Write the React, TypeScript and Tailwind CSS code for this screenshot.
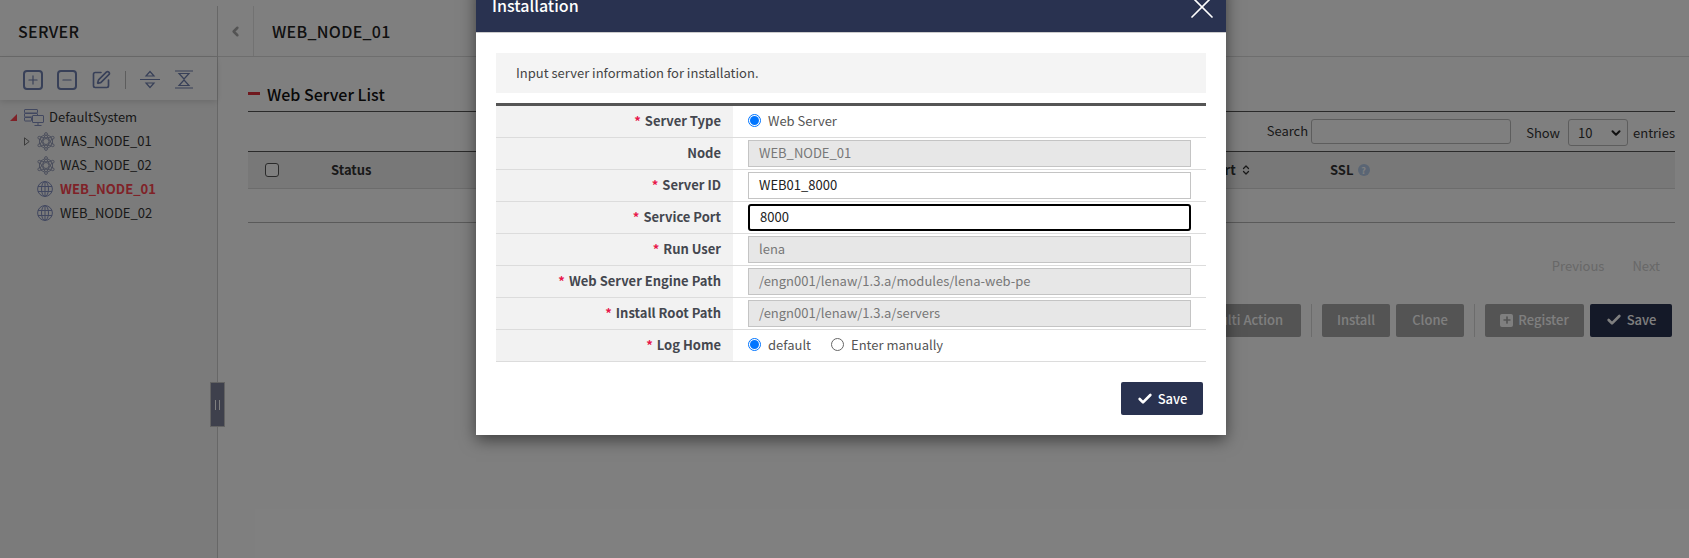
import React from "react";
import { Check, ChevronDown, ChevronLeft, ChevronsUpDown, SquarePen, Plus, Minus, X } from "lucide-react";

const font = "font-['Noto_Sans_CJK_KR','Noto_Sans',sans-serif]";

function ServerIcon() {
  return (
    <svg width="20" height="17" viewBox="0 0 20 17" fill="none" stroke="#8490c0" strokeWidth="1">
      <rect x="0.5" y="0.5" width="13" height="3.5" rx="0.5" />
      <rect x="0.5" y="4.5" width="13" height="3.5" rx="0.5" />
      <rect x="0.5" y="8.5" width="7" height="3.5" rx="0.5" />
      <rect x="8.5" y="6.5" width="11" height="7" rx="0.5" fill="#f6f6f6" />
      <path d="M14 13.5v2.5M10.5 16.5h7" />
    </svg>
  );
}

function AtomIcon() {
  return (
    <svg width="18" height="19" viewBox="0 0 18 19" fill="none" stroke="#8f96b4" strokeWidth="0.9">
      <path d="M9 2 15.5 5.7v7.6L9 17 2.5 13.3V5.7Z" />
      <path d="M9 2 2.5 13.3h13ZM9 17 2.5 5.7h13Z" />
      <circle cx="9" cy="9.5" r="3" />
      <circle cx="9" cy="2" r="1.4" fill="#f6f6f6" />
      <circle cx="9" cy="17" r="1.4" fill="#f6f6f6" />
      <circle cx="2.3" cy="5.7" r="1.4" fill="#f6f6f6" />
      <circle cx="15.7" cy="5.7" r="1.4" fill="#f6f6f6" />
      <circle cx="2.3" cy="13.3" r="1.4" fill="#f6f6f6" />
      <circle cx="15.7" cy="13.3" r="1.4" fill="#f6f6f6" />
    </svg>
  );
}

function GlobeIcon() {
  return (
    <svg width="16" height="16" viewBox="0 0 16 16" fill="none" stroke="#8490c0" strokeWidth="1">
      <circle cx="8" cy="8" r="7.4" />
      <ellipse cx="8" cy="8" rx="3.5" ry="7.4" />
      <path d="M8 .6v14.8M1 5.5h14M1 10.5h14" />
    </svg>
  );
}

function ExpandIcon() {
  return (
    <svg width="20" height="19" viewBox="0 0 20 19" fill="none" stroke="#7080b0" strokeWidth="1.2">
      <path d="M0 9.5h20M10 1.5 14 6H6ZM10 17.5 14 13H6Z" />
    </svg>
  );
}

function CollapseIcon() {
  return (
    <svg width="20" height="19" viewBox="0 0 20 19" fill="none" stroke="#7080b0" strokeWidth="1.2">
      <path d="M1 1h18M1 18h18M5 3.5h10L10 9ZM5 15.5h10L10 10Z" />
    </svg>
  );
}

function IconBox({ children }: { children: React.ReactNode }) {
  return (
    <span className="flex h-[20px] w-[20px] items-center justify-center rounded-[4px] border-2 border-[#7080b0]">
      {children}
    </span>
  );
}

function TreeItem({ icon, label, active, arrow }: { icon: React.ReactNode; label: string; active?: boolean; arrow?: boolean }) {
  return (
    <div className="flex h-6 items-center pl-[24px]">
      <span className="flex w-[13px] items-center">
        {arrow && (
          <svg width="6" height="9" viewBox="0 0 6 9" fill="none" stroke="#777" strokeWidth="1">
            <path d="M.5.8 5.2 4.5.5 8.2Z" />
          </svg>
        )}
      </span>
      <span className="flex w-[23px] items-center">{icon}</span>
      <span className={active ? "text-[13px] font-bold text-[#ff4450]" : "text-[13px] text-[#333]"}>{label}</span>
    </div>
  );
}

function Sidebar() {
  return (
    <aside className="relative flex w-[218px] shrink-0 flex-col border-r border-[#cfcfcf] bg-[#f6f6f6]">
      <div className="flex h-[51px] items-center border-b border-[#d4d4d4] bg-white pl-[18px] text-[16px] font-medium tracking-[0.3px] text-[#222]">SERVER</div>
      <div className="flex h-[43px] items-center gap-[14px] bg-white pl-[23px] pt-[2px] shadow-[0_2px_6px_rgba(0,0,0,0.12)]">
        <IconBox><Plus size={14} strokeWidth={2} color="#7080b0" /></IconBox>
        <IconBox><Minus size={14} strokeWidth={2} color="#7080b0" /></IconBox>
        <SquarePen size={20} strokeWidth={2} color="#7080b0" />
        <span className="h-[18px] w-px bg-[#bbb]" />
        <ExpandIcon />
        <CollapseIcon />
      </div>
      <div className="pt-[5px]">
        <div className="flex h-6 items-center pl-[10px]">
          <span className="mr-[7px] h-0 w-0 border-b-[7px] border-l-[7px] border-b-[#ff4450] border-l-transparent" />
          <span className="mr-[5px] flex"><ServerIcon /></span>
          <span className="text-[13px] text-[#333]">DefaultSystem</span>
        </div>
        <TreeItem arrow icon={<AtomIcon />} label="WAS_NODE_01" />
        <TreeItem icon={<AtomIcon />} label="WAS_NODE_02" />
        <TreeItem active icon={<GlobeIcon />} label="WEB_NODE_01" />
        <TreeItem icon={<GlobeIcon />} label="WEB_NODE_02" />
      </div>
      <div className="absolute right-[-8px] top-[376px] flex h-[45px] w-[15px] items-center justify-center border border-[#c4c4c4] bg-[#7c8199]">
        <span className="h-[10px] w-[5px] border-x border-white" />
      </div>
    </aside>
  );
}

function Btn({ children, dark, className }: { children: React.ReactNode; dark?: boolean; className: string }) {
  return (
    <span className={`flex h-[33px] items-center justify-center rounded-[2px] text-[13px] font-medium text-white ${dark ? "bg-[#293250]" : "bg-[#a8a8a8]"} ${className}`}>
      {children}
    </span>
  );
}

function Main() {
  return (
    <main className="min-w-0 flex-1 bg-white">
      <div className="flex h-[51px] items-center border-b border-[#dcdcdc]">
        <span className="flex h-full w-[36px] items-center justify-center border-r border-[#e4e4e4]">
          <ChevronLeft size={15} strokeWidth={4} color="#a8a8a8" />
        </span>
        <span className="pl-[18px] text-[16px] font-medium tracking-[0.3px] text-[#222]">WEB_NODE_01</span>
      </div>
      <div className="pl-[30px] pr-[14px]">
        <div className="flex h-[55px] items-end gap-[7px] border-b border-[#555] pb-[5px]">
          <span className="mb-[11px] h-[3px] w-[12px] bg-[#e0313c]" />
          <span className="text-[16px] font-medium text-[#111]">Web Server List</span>
        </div>
        <div className="flex h-[39px] items-start justify-end pt-[7px] text-[13px] text-[#333]">
          <span className="mr-[3px] leading-[24px]">Search</span>
          <span className="h-[25px] w-[200px] rounded-[3px] border border-[#bbb] bg-white" />
          <span className="ml-[15px] mr-[8px] pt-[2px] leading-[24px]">Show</span>
          <span className="flex h-[27px] w-[60px] items-center justify-between rounded-[3px] border border-[#bbb] pl-[9px] pr-[4px]">
            10 <ChevronDown size={14} strokeWidth={3.5} color="#222" />
          </span>
          <span className="ml-[5px] pt-[2px] leading-[24px]">entries</span>
        </div>
        <div className="flex h-[38px] items-center border-y border-[#555] border-b-[#d8d8d8] bg-[#f1f1f1] text-[13px] font-bold text-[#333]">
          <span className="ml-[17px] h-[14px] w-[14px] rounded-[3px] border border-[#555] bg-white" />
          <span className="ml-[52px] w-[40px]">Status</span>
          <span className="ml-[837px] flex w-[122px] items-center">Port <ChevronsUpDown size={12} strokeWidth={2.5} className="ml-[4px]" /></span>
          <span className="flex items-center gap-[4px]">
            SSL
            <span className="flex h-[12px] w-[12px] items-center justify-center rounded-full bg-[#b4cbe8] text-[9px] leading-none text-white">?</span>
          </span>
        </div>
        <div className="h-[34px] border-b border-[#b5b5b5]" />
        <div className="mt-[33px] flex justify-end pr-[15px] text-[13px] text-[#d0d0d0]">
          <span className="mr-[28px]">Previous</span>
          <span>Next</span>
        </div>
        <div className="mt-[28px] flex items-center justify-end gap-[6px] pr-[3px]">
          <Btn className="w-[110px]">Multi Action</Btn>
          <span className="mx-[4px] h-[33px] w-px bg-[#d8d8d8]" />
          <Btn className="w-[68px]">Install</Btn>
          <Btn className="w-[68px]">Clone</Btn>
          <span className="mx-[4px] h-[33px] w-px bg-[#d8d8d8]" />
          <Btn className="w-[99px] gap-[5px]"><span className="flex h-[13px] w-[13px] items-center justify-center rounded-[2px] bg-white"><Plus size={10} strokeWidth={4} color="#a8a8a8" /></span>Register</Btn>
          <Btn dark className="w-[82px] gap-[5px]"><Check size={16} strokeWidth={4} />Save</Btn>
        </div>
      </div>
    </main>
  );
}

function Field({ label, required, children }: { label: string; required?: boolean; children: React.ReactNode }) {
  return (
    <div className="flex h-[32px] border-b border-[#dcdcdc]">
      <div className="flex w-[237px] shrink-0 items-center justify-end bg-[#f2f2f2] pb-[2px] pr-[12px] text-[13px] font-bold text-[#44474f]">
        {required && <span className="mr-[4px] text-[#e8174b]">*</span>}
        {label}
      </div>
      <div className="flex flex-1 items-center pl-[15px] pr-[15px] text-[13px] text-[#555]">{children}</div>
    </div>
  );
}

function TextBox({ value, disabled, focused }: { value: string; disabled?: boolean; focused?: boolean }) {
  let tone = "border border-[#c4c4c4] bg-white text-[#222]";
  if (disabled) tone = "border border-[#c4c4c4] bg-[#e7e7e7] text-[#777]";
  if (focused) tone = "border-2 border-black rounded-[3px] bg-white text-[#222] pl-[9px]";
  return <div className={`flex h-[27px] w-full items-center pb-[1px] pl-[10px] text-[13px] ${tone}`}>{value}</div>;
}

function Radio({ checked, label }: { checked?: boolean; label: string }) {
  return (
    <span className="mb-[2px] mr-[20px] flex items-center gap-[7px]">
      {checked ? (
        <span className="flex h-[13px] w-[13px] items-center justify-center rounded-full border border-[#0075ff]">
          <span className="h-[9px] w-[9px] rounded-full bg-[#0075ff]" />
        </span>
      ) : (
        <span className="h-[13px] w-[13px] rounded-full border border-[#666]" />
      )}
      {label}
    </span>
  );
}

function Modal() {
  return (
    <div className="absolute left-[476px] top-[-18px] w-[750px] bg-white shadow-[0_5px_15px_rgba(0,0,0,0.5)]">
      <div className="flex h-[51px] items-center justify-between border-b border-[#ccc] bg-[#293250] pl-[16px] pr-[4px] text-white">
        <span className="mb-[5px] text-[16px] font-medium">Installation</span>
        <X size={40} strokeWidth={1} />
      </div>
      <div className="px-[20px] pt-[20px] pb-[20px]">
        <div className="flex h-[40px] items-center bg-[#f4f4f4] pl-[20px] text-[13px] text-[#444]">Input server information for installation.</div>
        <div className="mt-[10px] border-t-[3px] border-[#555]">
          <Field required label="Server Type"><Radio checked label="Web Server" /></Field>
          <Field label="Node"><TextBox disabled value="WEB_NODE_01" /></Field>
          <Field required label="Server ID"><TextBox value="WEB01_8000" /></Field>
          <Field required label="Service Port"><TextBox focused value="8000" /></Field>
          <Field required label="Run User"><TextBox disabled value="lena" /></Field>
          <Field required label="Web Server Engine Path"><TextBox disabled value="/engn001/lenaw/1.3.a/modules/lena-web-pe" /></Field>
          <Field required label="Install Root Path"><TextBox disabled value="/engn001/lenaw/1.3.a/servers" /></Field>
          <Field required label="Log Home"><Radio checked label="default" /><Radio label="Enter manually" /></Field>
        </div>
        <div className="mt-[20px] flex justify-end pr-[3px]">
          <Btn dark className="w-[82px] gap-[5px]"><Check size={16} strokeWidth={4} />Save</Btn>
        </div>
      </div>
    </div>
  );
}

export default function App() {
  return (
    <div className={`relative h-[558px] w-full overflow-hidden bg-white ${font}`}>
      <div className="h-[6px] bg-white shadow-[0_1px_4px_rgba(0,0,0,0.2)]" />
      <div className="flex h-[552px]">
        <Sidebar />
        <Main />
      </div>
      <div className="absolute inset-0 bg-black/50" />
      <Modal />
    </div>
  );
}
